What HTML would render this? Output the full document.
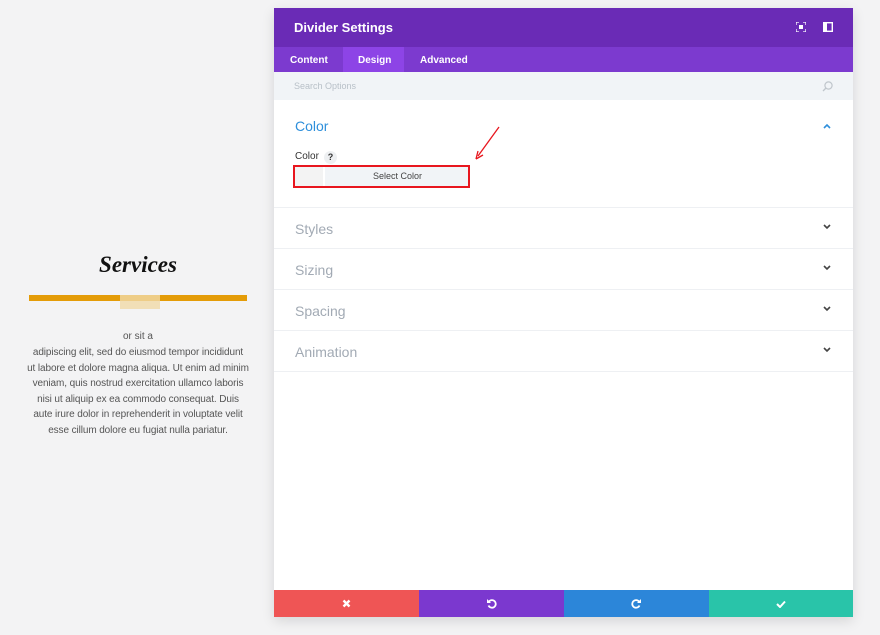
<!DOCTYPE html>
<html><head><style>
body{margin:0;width:880px;height:635px;background:#f3f3f4;font-family:"Liberation Sans",sans-serif;position:relative;overflow:hidden}
.a{position:absolute}
.panel{left:274px;top:8px;width:579px;height:609px;background:#fff;box-shadow:0 4px 12px rgba(0,0,0,.12)}
.hdr{left:0;top:0;width:579px;height:39px;background:#6a2bb6;color:#fff;font-weight:bold;font-size:13px}
.tabs{left:0;top:39px;width:579px;height:25px;background:#7c3acf;color:#fff;font-weight:bold;font-size:10px}
.sec{left:0;width:579px;border-bottom:1px solid #eef0f3;height:40px}
.sec span{position:absolute;left:21px;top:13px;font-size:14px;color:#a2aab4}
.chev{position:absolute;right:22px;top:16px}
.btn{top:582px;height:27px;width:145px;display:flex;align-items:center;justify-content:center}
.p{color:#555;font-size:10px;text-align:center;line-height:15.5px;white-space:nowrap}
</style></head><body>
<div class="a" style="left:30px;top:252px;width:216px;text-align:center;font-family:'Liberation Serif',serif;font-style:italic;font-weight:bold;font-size:23px;color:#111">Services</div>
<div class="a" style="left:29px;top:295px;width:218px;height:6px;background:#e49c08"></div>
<div class="a" style="left:120px;top:295px;width:40px;height:14px;background:#f0d9a8;opacity:.8"></div>
<div class="a p" style="left:30px;top:329px;width:216px">or sit a</div>
<div class="a p" style="left:18px;top:345px;width:240px;letter-spacing:-0.1px">adipiscing elit, sed do eiusmod tempor incididunt<br>ut labore et dolore magna aliqua. Ut enim ad minim<br>veniam, quis nostrud exercitation ullamco laboris<br>nisi ut aliquip ex ea commodo consequat. Duis<br>aute irure dolor in reprehenderit in voluptate velit<br>esse cillum dolore eu fugiat nulla pariatur.</div>
<div class="a panel">
<div class="a hdr"><span class="a" style="left:20px;top:12px">Divider Settings</span>
<svg class="a" style="left:522px;top:14px" width="10" height="10"><path d="M0 3V0H3M7 0H10V3M10 7V10H7M3 10H0V7" stroke="#fff" fill="none" stroke-width="1.3"/><rect x="3" y="3" width="4" height="4" fill="#fff"/></svg>
<svg class="a" style="left:549px;top:14px" width="10" height="10"><rect x=".7" y=".7" width="8.6" height="8.6" stroke="#fff" fill="none" stroke-width="1.4"/><rect x="1" y="1" width="3" height="8" fill="#fff"/></svg></div>
<div class="a tabs"><span class="a" style="left:16px;top:8px">Content</span>
<div class="a" style="left:69px;top:0;width:61px;height:25px;background:#8d44e6"></div>
<span class="a" style="left:84px;top:8px">Design</span><span class="a" style="left:146px;top:8px">Advanced</span></div>
<div class="a" style="left:0;top:64px;width:579px;height:28px;background:#f1f4f7"><span class="a" style="left:20px;top:9px;font-size:9px;color:#b8c0c8">Search Options</span>
<svg class="a" style="left:548px;top:9px" width="11" height="11"><circle cx="6.5" cy="4.5" r="3.6" stroke="#c0c6cc" fill="none" stroke-width="1.2"/><path d="M4 7L1 10" stroke="#c0c6cc" stroke-width="1.3"/></svg></div>
<div class="a sec" style="top:92px;height:107px"><span style="color:#2e8fdb;top:18px;font-size:14px">Color</span>
<svg class="chev" style="top:23px" width="8" height="6"><path d="M1 5L4 2L7 5" stroke="#2e8fdb" fill="none" stroke-width="1.6"/></svg>
<span class="a" style="left:21px;top:51px;font-size:10px;color:#333;position:absolute">Color</span>
<div class="a" style="left:50px;top:51px;width:13px;height:13px;border-radius:7px;background:#eef0f2;font-size:9px;font-weight:bold;text-align:center;line-height:13px;color:#333">?</div>
<div class="a" style="left:19px;top:65px;width:173px;height:19px;border:2px solid #e8161e;background:#f1f4f7"><div class="a" style="left:0;top:0;width:28px;height:19px;background:#f3f3f3;border-right:2px solid #fff"></div><span class="a" style="left:78px;top:4px;font-size:9px;color:#444">Select Color</span></div></div>
<svg class="a" style="left:200px;top:117px" width="28" height="36"><path d="M25 2L4 31" stroke="#e8161e" stroke-width="1.3"/><path d="M2 34L4 26M2 34L9 30" stroke="#e8161e" stroke-width="1.3"/></svg>
<div class="a sec" style="top:200px"><span>Styles</span><svg class="chev" width="8" height="6"><path d="M1 1L4 4L7 1" stroke="#444" fill="none" stroke-width="1.6"/></svg></div>
<div class="a sec" style="top:241px"><span>Sizing</span><svg class="chev" width="8" height="6"><path d="M1 1L4 4L7 1" stroke="#444" fill="none" stroke-width="1.6"/></svg></div>
<div class="a sec" style="top:282px"><span>Spacing</span><svg class="chev" width="8" height="6"><path d="M1 1L4 4L7 1" stroke="#444" fill="none" stroke-width="1.6"/></svg></div>
<div class="a sec" style="top:323px"><span>Animation</span><svg class="chev" width="8" height="6"><path d="M1 1L4 4L7 1" stroke="#444" fill="none" stroke-width="1.6"/></svg></div>
<div class="a btn" style="left:0;background:#ef5555"><svg width="9" height="9"><path d="M1.5 1.5L7.5 7.5M7.5 1.5L1.5 7.5" stroke="#fff" stroke-width="2.4"/></svg></div>
<div class="a btn" style="left:145px;background:#7b38cf"><svg width="11" height="11"><path d="M3 3.5A3.8 3.8 0 1 1 2.5 7.5" stroke="#fff" fill="none" stroke-width="1.8"/><path d="M1 1V5H5Z" fill="#fff"/></svg></div>
<div class="a btn" style="left:290px;background:#2c86d9"><svg width="11" height="11"><path d="M8 3.5A3.8 3.8 0 1 0 8.5 7.5" stroke="#fff" fill="none" stroke-width="1.8"/><path d="M10 1V5H6Z" fill="#fff"/></svg></div>
<div class="a btn" style="left:435px;width:144px;background:#29c4a9"><svg width="10" height="8"><path d="M1 4L4 7L9 1.5" stroke="#fff" fill="none" stroke-width="2"/></svg></div>
</div>
</body></html>
